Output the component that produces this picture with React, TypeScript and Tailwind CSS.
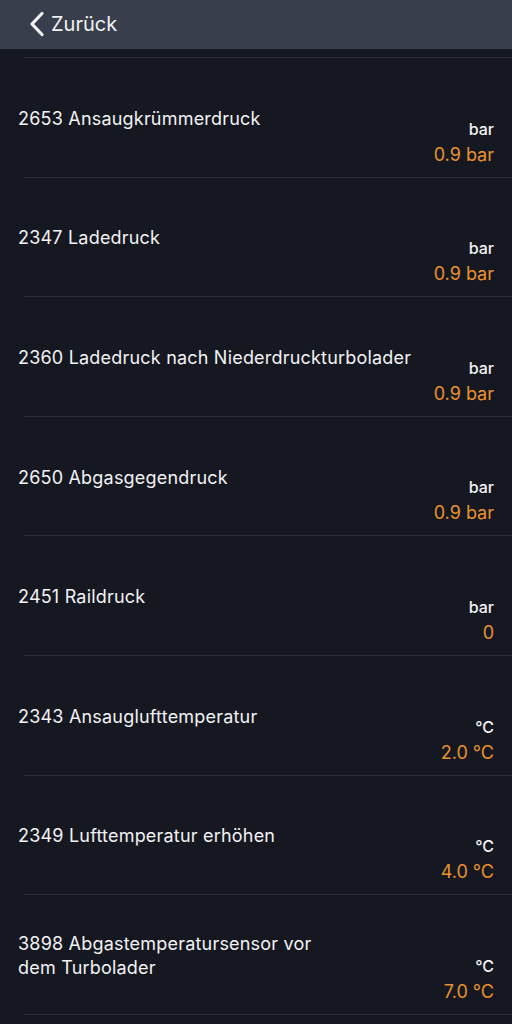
import React from 'react';

type Row = { title: React.ReactNode; unit: string; value: string };

const rows: Row[] = [
  { title: '2653 Ansaugkrümmerdruck', unit: 'bar', value: '0.9 bar' },
  { title: '2347 Ladedruck', unit: 'bar', value: '0.9 bar' },
  { title: '2360 Ladedruck nach Niederdruckturbolader', unit: 'bar', value: '0.9 bar' },
  { title: '2650 Abgasgegendruck', unit: 'bar', value: '0.9 bar' },
  { title: '2451 Raildruck', unit: 'bar', value: '0' },
  { title: '2343 Ansauglufttemperatur', unit: '°C', value: '2.0 °C' },
  { title: '2349 Lufttemperatur erhöhen', unit: '°C', value: '4.0 °C' },
  {
    title: (
      <>
        3898 Abgastemperatursensor vor
        <br />
        dem Turbolader
      </>
    ),
    unit: '°C',
    value: '7.0 °C',
  },
];

const App: React.FC = () => {
  return (
    <div
      className="min-h-screen bg-[#161821] text-[#f2f2f4] overflow-hidden"
      style={{ fontFamily: 'Inter, "Noto Sans", sans-serif' }}
    >
      {/* nav bar */}
      <div className="h-[49px] bg-[#383e4b] flex items-center pl-[28px]">
        <svg width="18" height="26" viewBox="0 0 18 26" className="mr-[5px] -mt-[2px]">
          <path d="M14 2.5 L4 13 L14 23.5" fill="none" stroke="#f4f4f6" strokeWidth="3.2" strokeLinecap="round" strokeLinejoin="round" />
        </svg>
        <span className="text-[20px] leading-none -mt-[2px]">Zurück</span>
      </div>

      <div className="pt-[8px]">
        <div className="ml-[24px] h-px bg-[#2a2d37]" />
        {rows.map((r, i) => (
          <div key={i}>
            <div className="h-[118.6px] flex items-center justify-between pl-[18px] pr-[18px]">
              <div className="text-[18px] tracking-[0.2px] leading-[24px] mt-[3px]">{r.title}</div>
              <div className="self-end pb-[9px] flex flex-col items-end shrink-0">
                <span className="text-[16px] font-medium leading-[20px]">{r.unit}</span>
                <span className="text-[18px] leading-[26px] mt-[3px] text-[#e8922f]">{r.value}</span>
              </div>
            </div>
            <div className="ml-[24px] h-px bg-[#2a2d37]" />
          </div>
        ))}
      </div>
    </div>
  );
};

export default App;
